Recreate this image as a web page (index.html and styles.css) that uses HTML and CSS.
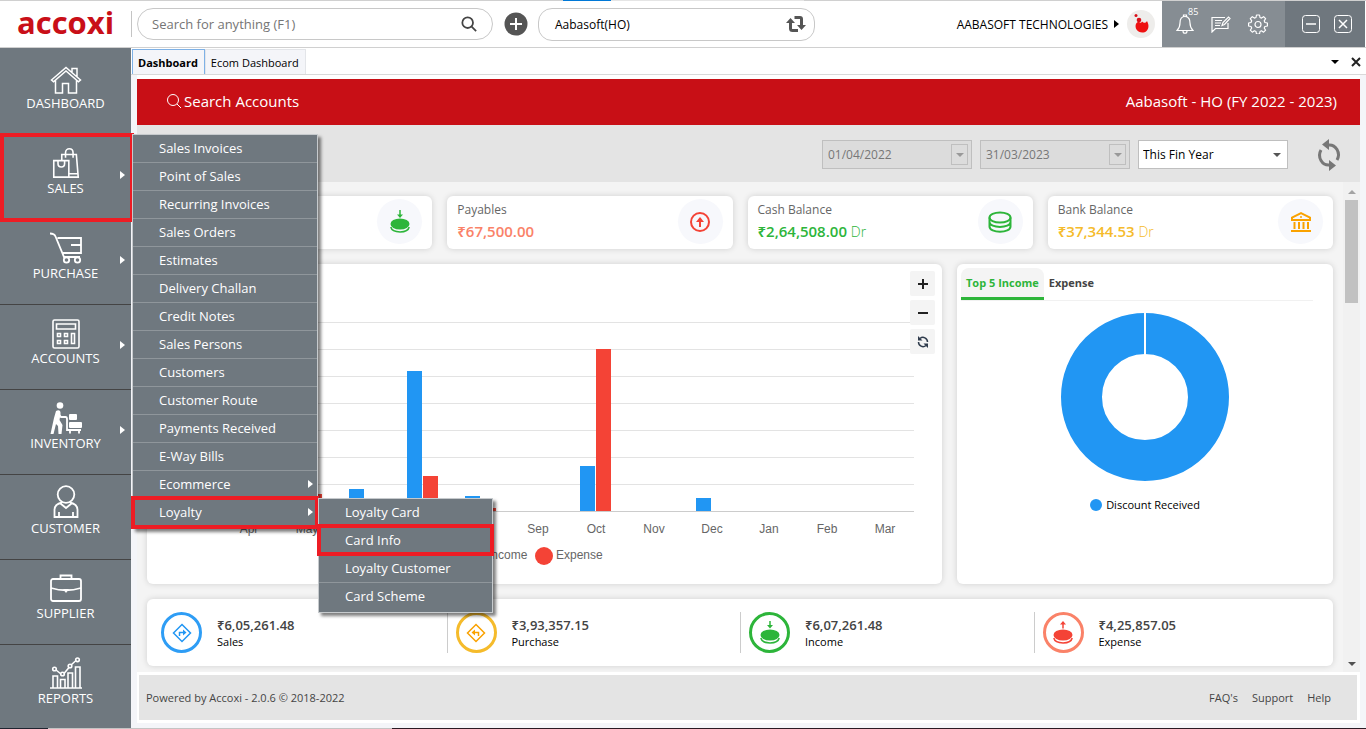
FILE: index.html
```html
<!DOCTYPE html>
<html lang="en">
<head>
    <meta charset="UTF-8">
    <meta name="viewport" content="width=device-width, initial-scale=1.0">
    <title>Accoxi - Dashboard</title>
    <link rel="stylesheet" href="styles.css">
</head>
<body>

    <header class="topbar">
        <a href="#" class="logo">accoxi</a>
        <form class="search" role="search">
            <input type="text" id="search" aria-label="Search" placeholder="Search for anything (F1)">
            <button type="button" aria-label="Search">
                <svg width="16" height="16" viewBox="0 0 18 18" fill="none" stroke="#444" stroke-width="2"><circle cx="7.500" cy="7.500" r="6"/><path d="M12 12l5 5"/></svg>
            </button>
        </form>
        <button type="button" class="add" aria-label="Add new">
            <svg width="24" height="24" viewBox="0 0 24 24"><circle cx="12" cy="12" r="11.500" fill="#555"/><path d="M12 6v12M6 12h12" stroke="#fff" stroke-width="2"/></svg>
        </button>
        <button type="button" class="branch">
            <span>Aabasoft(HO)</span>
            <svg width="20" height="18" viewBox="0 0 20 18" fill="none" stroke="#555" stroke-width="3"><path d="M4.500 6v7.500q0 2 2 2H12M8.500 2.500H14q1.500 0 1.500 1.500v8"/><path d="M0 8l4.500-5L9 8zM11 10l4.500 5L20 10z" fill="#555" stroke="none"/></svg>
        </button>

        <button type="button" class="company">AABASOFT TECHNOLOGIES <i class="caret-right"></i></button>
        <svg class="avatar" width="28" height="28" viewBox="0 0 28 28"><circle cx="14" cy="14" r="14" fill="#eeedeb"/><path d="M15 11.500c2.500 2.500 4 1 5-.5 2.500 4.500 1.500 8-.5 10-2.500 2.500-8 2-10-1.500C7.500 16 9 12 12 11.800c1 1.200 2.500 1.200 3-.3z" fill="#ee1111"/><circle cx="12" cy="10" r="2.300" fill="#d9101a"/><circle cx="9" cy="5.500" r="1.500" fill="#d9101a"/></svg>

        <div class="tools">
            <button type="button" aria-label="Notifications">
                <svg width="18" height="20" viewBox="0 0 18 20" fill="none" stroke="#fff" stroke-width="1.200"><path d="M9 2.500C5 2.500 4 6 4 9c0 4-1.500 6-3 7.500h16C15.500 15 14 13 14 9c0-3-1-6.500-5-6.500zM7.500 2.500V1h3v1.500M7 17c0 3 4 3 4 0"/></svg>
                <span class="badge">85</span>
            </button>
            <button type="button" aria-label="Messages">
                <svg width="20" height="18" viewBox="0 0 20 18" fill="none" stroke="#fff" stroke-width="1.200"><path d="M14 2.500H1V17l3.500-3.500H17V8M4 5.500h7M4 8h6M4 10.500h5M11 10.500l1-3 5.500-5.500 1.500 1.500-5.500 6z"/></svg>
            </button>
            <button type="button" aria-label="Settings">
                <svg width="20" height="20" viewBox="0 0 20 20" fill="none" stroke="#fff" stroke-width="1.200" stroke-linejoin="round"><path d="M8.500 1h3l.5 2.500 1.500.6L15.600 2.700l2 2-1.400 2.100.7 1.700 2.500.5v3l-2.500.5-.7 1.500 1.400 2.200-2 2-2.100-1.400-1.500.7-.5 2.500h-3L8 17.500l-1.600-.7-2.100 1.400-2-2 1.400-2.200-.7-1.500L.6 12V9l2.400-.5.7-1.700-1.400-2.100 2-2 2.100 1.400L8 3.500z"/><circle cx="10" cy="10.500" r="3"/></svg>
            </button>
        </div>
        <div class="window-buttons">
            <button type="button" aria-label="Minimize">
                <svg width="18" height="18" viewBox="0 0 18 18" fill="none" stroke="#fff"><rect x=".5" y=".5" width="17" height="17" rx="3"/><path d="M4 9h10" stroke-width="1.500"/></svg>
            </button>
            <button type="button" aria-label="Close">
                <svg width="18" height="18" viewBox="0 0 18 18" fill="none" stroke="#fff"><rect x=".5" y=".5" width="17" height="17" rx="3"/><path d="M5 5l8 8M13 5l-8 8" stroke-width="1.500"/></svg>
            </button>
        </div>
    </header>

    <div class="layout">
        <nav class="sidebar">
            <ul>
                <li>
                    <a href="#">
                        <svg width="32" height="28" viewBox="0 0 32 28" fill="none" stroke="#fff" stroke-width="1.500"><path d="M1.500 14L16 1.500 30.500 14l-2 1.800L16 5 3.500 15.800zM22 6V2.500h5v8M5.500 14.500V27h7v-9.500h6V27h8V14.500"/></svg>
                        DASHBOARD
                    </a>
                </li>
                <li class="open">
                    <a href="#">
                        <svg width="30" height="32" viewBox="0 0 30 34" fill="none" stroke="#fff" stroke-width="1.700"><path d="M2 14.500h16V32H2zM6.500 14.500v3c0 5 7 5 7 0v-3M10.500 14V8H26l2 24H18M18 28.500h9.500M14.500 11.500V6c0-5.500 8-5.500 8 0v5.500"/></svg>
                        SALES <i class="caret-right"></i>
                    </a>
                    <ul class="menu">
                        <li><a href="#">Sales Invoices</a></li>
                        <li><a href="#">Point of Sales</a></li>
                        <li><a href="#">Recurring Invoices</a></li>
                        <li><a href="#">Sales Orders</a></li>
                        <li><a href="#">Estimates</a></li>
                        <li><a href="#">Delivery Challan</a></li>
                        <li><a href="#">Credit Notes</a></li>
                        <li><a href="#">Sales Persons</a></li>
                        <li><a href="#">Customers</a></li>
                        <li><a href="#">Customer Route</a></li>
                        <li><a href="#">Payments Received</a></li>
                        <li><a href="#">E-Way Bills</a></li>
                        <li><a href="#">Ecommerce <i class="caret-right"></i></a></li>
                        <li class="marked">
                            <a href="#">Loyalty <i class="caret-right"></i></a>
                            <ul class="menu submenu">
                                <li><a href="#">Loyalty Card</a></li>
                                <li class="marked"><a href="#">Card Info</a></li>
                                <li><a href="#">Loyalty Customer</a></li>
                                <li><a href="#">Card Scheme</a></li>
                            </ul>
                        </li>
                    </ul>
                </li>
                <li>
                    <a href="#">
                        <svg width="34" height="32" viewBox="0 0 34 32" fill="none" stroke="#fff" stroke-width="1.800"><path d="M1 1.500c3 0 4.500.5 5.500 3L15 25h16M8.500 6H32v15H14M22 13h10"/><circle cx="17.500" cy="28" r="2.700"/><circle cx="28.500" cy="28" r="2.700"/></svg>
                        PURCHASE <i class="caret-right"></i>
                    </a>
                </li>
                <li>
                    <a href="#">
                        <svg width="28" height="30" viewBox="0 0 28 30" fill="none" stroke="#fff" stroke-width="1.600"><rect x="1" y="1" width="26" height="28" rx="1.500"/><path d="M4.500 5h19v5h-19zM5.500 14.500h3v3h-3zM12.500 14.500h3v3h-3zM5.500 21.500h3v3h-3zM12.500 21.500h3v3h-3zM19.500 14.500h3v10h-3z"/></svg>
                        ACCOUNTS <i class="caret-right"></i>
                    </a>
                </li>
                <li>
                    <a href="#">
                        <svg width="32" height="32" viewBox="0 0 32 32" fill="none" stroke="#fff" stroke-width="1.800"><circle cx="10" cy="3.500" r="3.300" fill="#fff" stroke="none"/><path d="M6 9c3-2 5 0 4.500 3l-1 6 3 5-1 9H8.500l-.5-8-2-2-2.500 10H.5L4 16z" fill="#fff" stroke="none"/><path d="M8 11l3 4h4.500c1 0 1.500 1 1.500 2v11h14"/><rect x="19" y="12" width="8" height="6" rx="1" fill="#fff" stroke="none"/><rect x="19" y="20" width="13" height="6" rx="1" fill="#fff" stroke="none"/><path d="M20 29v2.500M29 29v2.500"/></svg>
                        INVENTORY <i class="caret-right"></i>
                    </a>
                </li>
                <li>
                    <a href="#">
                        <svg width="26" height="34" viewBox="0 0 26 34" fill="none" stroke="#fff" stroke-width="1.800"><circle cx="13" cy="9.500" r="8.300"/><path d="M9 17.500c-5 1-7.500 3-7.500 7.500v7h23v-7c0-4.500-2.500-6.500-7.500-7.500M7.500 18.500L13 23l5.500-4.500M6 32v-5M20 32v-5"/></svg>
                        CUSTOMER
                    </a>
                </li>
                <li>
                    <a href="#">
                        <svg width="32" height="30" viewBox="0 0 32 30" fill="none" stroke="#fff" stroke-width="1.800"><rect x="1" y="5" width="30" height="22" rx="2"/><path d="M10.500 5V1.500h11V5M1 14c10 3 20 3 30 0"/><path d="M13 15h6l-3 4z" fill="#fff" stroke="none"/></svg>
                        SUPPLIER
                    </a>
                </li>
                <li>
                    <a href="#">
                        <svg width="32" height="32" viewBox="0 0 32 32" fill="none" stroke="#fff" stroke-width="1.600"><path d="M0 31h32M3 31V19h4.500v12M10.500 31v-8.500H15V31M18 31V16h4.500v15M25.500 31V10H30v21M6 13l5 4M14 16.500l5-6M21 8l5-4.500"/><circle cx="4.500" cy="12" r="1.800"/><circle cx="12.500" cy="17" r="1.800"/><circle cx="20" cy="9" r="1.800"/><circle cx="27.500" cy="2.800" r="1.800"/></svg>
                        REPORTS
                    </a>
                </li>
            </ul>
        </nav>

        <main>
            <div class="tabs">
                <a href="#" class="tab active">Dashboard</a>
                <a href="#" class="tab">Ecom Dashboard</a>
                <button type="button" class="tabs-list" aria-label="Tab list"><i class="caret-down"></i></button>
                <button type="button" aria-label="Close tab">
                    <svg width="10" height="10" viewBox="0 0 10 10" stroke="#222" stroke-width="2"><path d="M1 1l8 8M9 1L1 9"/></svg>
                </button>
            </div>

            <div class="page">
                <div class="banner">
                    <button type="button">
                        <svg width="16" height="16" viewBox="0 0 16 16" fill="none" stroke="#fff"><circle cx="7" cy="7" r="5.500"/><path d="M11 11l4 4"/></svg>
                        Search Accounts
                    </button>
                    <span>Aabasoft - HO (FY 2022 - 2023)</span>
                </div>

                <div class="filters">
                    <div class="date">
                        <input type="text" id="from" value="01/04/2022" aria-label="From date" disabled>
                        <span class="date-arrow"><i class="caret-down"></i></span>
                    </div>
                    <div class="date">
                        <input type="text" id="to" value="31/03/2023" aria-label="To date" disabled>
                        <span class="date-arrow"><i class="caret-down"></i></span>
                    </div>
                    <div class="period">
                        <select id="period" aria-label="Period">
                            <option>This Fin Year</option>
                        </select>
                        <i class="caret-down"></i>
                    </div>
                    <button type="button" class="reload" aria-label="Reload">
                        <svg width="26" height="32" viewBox="0 0 26 32" fill="none" stroke="#777" stroke-width="3"><path d="M12 6c8-1 13 8 9 15M14 26C6 27 1 18 5 11"/><path d="M13 0v11L6 5.500zM13 21v11l7-5.500z" fill="#777" stroke="none"/></svg>
                    </button>
                </div>

                <div class="scroll-area">
                    <div class="content">
                        <section class="cards">
                            <div class="card">
                                <span class="card-icon"><svg width="20" height="24" viewBox="0 0 20 24"><path d="M10 0v7" stroke="#2db53a" stroke-width="1.500"/><path d="M7 4.500h6L10 8z" fill="#2db53a"/><ellipse cx="10" cy="14" rx="9.500" ry="5.500" fill="#2db53a"/><path d="M.8 17c1.500 6.500 17 6.500 18.400 0" fill="none" stroke="#2db53a" stroke-width="1.500"/></svg></span>
                            </div>
                            <div class="card">
                                <div>
                                    <p>Payables</p>
                                    <strong class="salmon">₹67,500.00</strong>
                                </div>
                                <span class="card-icon"><svg width="22" height="22" viewBox="0 0 22 22" fill="none" stroke="#f44336" stroke-width="2"><circle cx="11" cy="11" r="9"/><path d="M11 16V9"/><path d="M7 11l4-5 4 5z" fill="#f44336" stroke="none"/></svg></span>
                            </div>
                            <div class="card">
                                <div>
                                    <p>Cash Balance</p>
                                    <strong class="green">₹2,64,508.00 <small>Dr</small></strong>
                                </div>
                                <span class="card-icon"><svg width="24" height="22" viewBox="0 0 24 22" fill="none" stroke="#2db53a" stroke-width="2"><ellipse cx="12" cy="6.500" rx="10.500" ry="5"/><path d="M1.500 6.500v9c0 7 21 7 21 0v-9M1.500 11c0 6.500 21 6.500 21 0"/></svg></span>
                            </div>
                            <div class="card">
                                <div>
                                    <p>Bank Balance</p>
                                    <strong class="yellow">₹37,344.53 <small>Dr</small></strong>
                                </div>
                                <span class="card-icon"><svg width="22" height="22" viewBox="0 0 22 22" fill="none" stroke="#faa200" stroke-width="2"><path d="M1 20h20M2 9V6.500L11 2l9 4.500V9zM4.500 11v7M9 11v7M13.500 11v7M18 11v7"/><circle cx="11" cy="6" r="1" fill="#faa200" stroke="none"/></svg></span>
                            </div>
                        </section>

                        <section class="charts">
                            <div class="panel">
                                <svg class="bar-chart" viewBox="0 0 795 320">
                                    <path class="grid" d="M72 58.500h695M72 85.500h695M72 112.500h695M72 139.500h695M72 166.500h695M72 193.500h695M72 220.500h695"/>
                                    <g fill="#2196f3">
                                        <rect x="202" y="225" width="15" height="22"/>
                                        <rect x="260" y="107" width="15" height="140"/>
                                        <rect x="318" y="232" width="15" height="15"/>
                                        <rect x="433" y="202" width="15" height="45"/>
                                        <rect x="549" y="234" width="15" height="13"/>
                                    </g>
                                    <g fill="#f44336">
                                        <rect x="160" y="230" width="15" height="17"/>
                                        <rect x="276" y="212" width="15" height="35"/>
                                        <rect x="334" y="244" width="15" height="3"/>
                                        <rect x="449" y="85" width="15" height="162"/>
                                    </g>
                                    <path class="axis" d="M72 247.500h695"/>
                                    <g class="months">
                                        <text x="102" y="269">Apr</text>
                                        <text x="160" y="269">May</text>
                                        <text x="391" y="269">Sep</text>
                                        <text x="449" y="269">Oct</text>
                                        <text x="507" y="269">Nov</text>
                                        <text x="565" y="269">Dec</text>
                                        <text x="622" y="269">Jan</text>
                                        <text x="680" y="269">Feb</text>
                                        <text x="738" y="269">Mar</text>
                                    </g>
                                    <g class="legend">
                                        <circle cx="328" cy="292" r="9" fill="#2196f3"/>
                                        <text x="341" y="295">Income</text>
                                        <circle cx="397" cy="292" r="9" fill="#f44336"/>
                                        <text x="409" y="295">Expense</text>
                                    </g>
                                </svg>
                                <div class="zoom">
                                    <button type="button" aria-label="Zoom in"><svg width="10" height="10" viewBox="0 0 10 10" stroke="#222" stroke-width="2"><path d="M0 5h10M5 0v10"/></svg></button>
                                    <button type="button" aria-label="Zoom out"><svg width="10" height="10" viewBox="0 0 10 10" stroke="#222" stroke-width="2"><path d="M0 5h10"/></svg></button>
                                    <button type="button" aria-label="Reset zoom"><svg width="12" height="12" viewBox="0 0 12 12" fill="none" stroke="#2f3b4c" stroke-width="1.500"><path d="M3 2.500c3-2.500 7.500-.5 7.500 3.500M9 9.500C6 12 1.500 10 1.500 6"/><path d="M1 0v4.500h4.500zM11 12V7.500H6.500z" fill="#2f3b4c" stroke="none"/></svg></button>
                                </div>
                            </div>

                            <div class="panel top5">
                                <div class="top5-tabs">
                                    <a href="#" class="active">Top 5 Income</a>
                                    <a href="#">Expense</a>
                                </div>
                                <svg class="donut" width="168" height="168" viewBox="0 0 168 168"><circle cx="84" cy="84" r="63.500" fill="none" stroke="#2196f3" stroke-width="41"/><path d="M84 0v42" stroke="#fff" stroke-width="2"/></svg>
                                <p class="donut-legend">Discount Received</p>
                            </div>
                        </section>

                        <section class="totals">
                            <div class="total">
                                <span class="ring blue"><svg width="20" height="20" viewBox="0 0 20 20" fill="none" stroke="#2196f3" stroke-width="1.500"><path d="M10 1.500l8.500 8.500-8.500 8.500L1.500 10zM7.500 13V9.500H12"/><path d="M11 6.500l3.500 3-3.500 3z" fill="#2196f3" stroke="none"/></svg></span>
                                <div><strong>₹6,05,261.48</strong><p>Sales</p></div>
                            </div>
                            <div class="total">
                                <span class="ring amber"><svg width="20" height="20" viewBox="0 0 20 20" fill="none" stroke="#faa200" stroke-width="1.500"><path d="M10 1.500l8.500 8.500-8.500 8.500L1.500 10zM12.500 13V9.500H8"/><path d="M9 6.500l-3.500 3 3.500 3z" fill="#faa200" stroke="none"/></svg></span>
                                <div><strong>₹3,93,357.15</strong><p>Purchase</p></div>
                            </div>
                            <div class="total">
                                <span class="ring lime"><svg width="20" height="24" viewBox="0 0 20 24"><path d="M10 0v6" stroke="#2db53a" stroke-width="1.500"/><path d="M7 4h6l-3 3.500z" fill="#2db53a"/><ellipse cx="10" cy="14" rx="9.500" ry="5.500" fill="#2db53a"/><path d="M.8 17c1.500 6.500 17 6.500 18.400 0" fill="none" stroke="#2db53a" stroke-width="1.500"/></svg></span>
                                <div><strong>₹6,07,261.48</strong><p>Income</p></div>
                            </div>
                            <div class="total">
                                <span class="ring coral"><svg width="20" height="24" viewBox="0 0 20 24"><path d="M10 2v5.500" stroke="#f44336" stroke-width="1.500"/><path d="M7 3.500h6L10 0z" fill="#f44336"/><ellipse cx="10" cy="14" rx="9.500" ry="5.500" fill="#f44336"/><path d="M.8 17c1.500 6.500 17 6.500 18.400 0" fill="none" stroke="#f44336" stroke-width="1.500"/></svg></span>
                                <div><strong>₹4,25,857.05</strong><p>Expense</p></div>
                            </div>
                        </section>
                    </div>
                    <div class="scrollbar">
                        <i class="caret-up"></i>
                        <div class="thumb"></div>
                        <i class="caret-down"></i>
                    </div>
                </div>

                <footer>
                    <span>Powered by Accoxi - 2.0.6 © 2018-2022</span>
                    <a href="#">FAQ's</a>
                    <a href="#">Support</a>
                    <a href="#">Help</a>
                </footer>
            </div>
        </main>
    </div>

</body>
</html>
```

FILE: styles.css
```css
* {
    box-sizing: border-box;
}

body {
    font-family: 'Open Sans', 'Noto Sans', sans-serif;
    font-size: 12px;
    margin: 0;
    min-height: 100vh;
    display: flex;
    flex-direction: column;
    background-color: #f4f5f9;
    color: #000;
}

/* edge of the window */
body::after {
    content: '';
    height: 1px;
    background: linear-gradient(to right, #1f2430 48px, #c4c4c4 48px, #c4c4c4 392px, #2a1a24 392px);
}

button, input, select {
    font: inherit;
    color: inherit;
}

button {
    padding: 0;
    border: none;
    background: none;
    cursor: pointer;
    display: flex;
    align-items: center;
    justify-content: center;
}

a {
    color: inherit;
    text-decoration: none;
}

ul {
    list-style: none;
    margin: 0;
    padding: 0;
}

p {
    margin: 0;
}

svg {
    flex-shrink: 0;
}

/* small triangles */
.caret-right {
    border: 4px solid transparent;
    border-left: 5px solid currentColor;
    border-right: 0;
}

.caret-down {
    border: 4px solid transparent;
    border-top: 4px solid currentColor;
    border-bottom: 0;
}

.caret-up {
    border: 4px solid transparent;
    border-bottom: 4px solid currentColor;
    border-top: 0;
}

/* top bar */
.topbar {
    height: 48px;
    padding: 1px 1px 0 0;
    display: flex;
    align-items: center;
    background: linear-gradient(to right, #d0d0d0 563px, #0078d7 563px, #0078d7 611px, #e5e5e5 611px, #e5e5e5 804px, #d0d0d0 804px) top / 100% 1px no-repeat #fff;
    border-bottom: 1px solid #d0d0d0;
}

.logo {
    width: 132px;
    height: 26px;
    padding-left: 17px;
    border-right: 1px solid #c4c4c4;
    color: #c90f18;
    font-size: 31px;
    font-weight: 700;
    line-height: 22px;
}

.search {
    width: 356px;
    height: 32px;
    margin-left: 5px;
    padding: 0 15px 0 14px;
    display: flex;
    align-items: center;
    border: 1px solid #c8c8c8;
    border-radius: 16px;
}

.search input {
    flex: 1;
    padding: 0;
    border: none;
    outline: none;
    font-size: 13px;
}

.search input::placeholder {
    color: #757575;
}

.add {
    margin: 0 10px 0 11px;
}

.branch {
    width: 277px;
    height: 33px;
    padding: 0 8px 0 16px;
    justify-content: space-between;
    border: 1px solid #c8c8c8;
    border-radius: 14px;
}

.company {
    margin-left: auto;
    gap: 6px;
    white-space: nowrap;
}

.avatar {
    margin: 0 7px 0 8px;
}

.tools,
.window-buttons {
    align-self: stretch;
    display: flex;
    align-items: center;
    justify-content: center;
    color: #fff;
}

.tools {
    width: 123px;
    padding-right: 3px;
    gap: 17px;
    background: #868d93;
}

.tools button {
    position: relative;
}

.badge {
    position: absolute;
    top: -8px;
    left: 12px;
    font-size: 9px;
    line-height: 12px;
}

.window-buttons {
    width: 80px;
    padding-left: 4px;
    gap: 14px;
    background: #6f777e;
}

/* sidebar */
.layout {
    flex: 1;
    display: flex;
}

.sidebar {
    width: 131px;
    flex-shrink: 0;
    padding-top: 2px;
    background: #6f787f;
    color: #fff;
}

.sidebar > ul > li {
    position: relative;
    height: 85px;
    border-bottom: 1px solid #444;
}

.sidebar > ul > li:last-child {
    height: 83px;
    border-bottom: none;
}

.sidebar > ul > li > a {
    height: 62px;
    display: flex;
    flex-direction: column;
    align-items: center;
    justify-content: flex-end;
    font-size: 13px;
    line-height: 18px;
}

.sidebar > ul > li > a .caret-right {
    position: absolute;
    right: 6px;
    top: 36px;
}

.open::after,
.marked::after {
    content: '';
    position: absolute;
    border: 4px solid #ed1c24;
    pointer-events: none;
}

.open::after {
    inset: -2px -3px -3px 0;
}

.marked::after {
    inset: -3px -2px -2px;
    z-index: 1;
}

.menu {
    position: absolute;
    z-index: 10;
    top: -1px;
    left: 132px;
    width: 186px;
    padding-bottom: 1px;
    border: 1px solid #c6cacd;
    background: #6f787f;
    box-shadow: 3px 3px 3px rgba(0, 0, 0, 0.5);
}

.menu > li {
    position: relative;
    height: 28px;
    border-bottom: 1px solid #8f969b;
}

.menu > li:last-child {
    border-bottom: none;
}

.menu > li > a {
    height: 26px;
    padding: 0 4px 0 26px;
    display: flex;
    align-items: center;
    justify-content: space-between;
    font-size: 13px;
}

.submenu {
    left: 185px;
    width: 175px;
}

/* document tabs */
main {
    flex: 1;
    min-width: 0;
    display: flex;
    flex-direction: column;
}

.tabs {
    height: 27px;
    padding: 1px 5px 0 1px;
    display: flex;
    background: #fff;
    border-bottom: 1px solid #d9d9d9;
}

.tab {
    padding: 0 6px 0 5px;
    display: flex;
    align-items: center;
    background: #f4f5f9;
    border: 1px solid #e3e5e9;
    border-bottom: none;
    font-size: 11px;
}

.tab.active {
    border-color: #7eb1e6;
    font-weight: 700;
}

.tabs-list {
    margin: 0 12px 0 auto;
}

.page {
    flex: 1;
    margin: 0 6px 5px;
    padding-top: 4px;
    background: #fff;
    display: flex;
    flex-direction: column;
}

.banner {
    height: 46px;
    padding: 0 23px 2px 29px;
    display: flex;
    align-items: center;
    justify-content: space-between;
    background: #c80f16;
    color: #fff;
    font-size: 15px;
}

.banner button {
    gap: 2px;
}

.filters {
    height: 57px;
    padding: 2px 18px 0;
    display: flex;
    align-items: center;
    justify-content: flex-end;
    gap: 8px;
    background: #e4e4e4;
}

.date,
.period {
    width: 150px;
    height: 29px;
    display: flex;
    align-items: center;
    border: 1px solid #bfbfbf;
}

.date {
    padding: 0 3px 0 5px;
    background: #dcdcdc;
    color: #777;
}

.date input {
    flex: 1;
    min-width: 0;
    padding: 0;
    border: none;
    background: none;
}

.date-arrow {
    width: 17px;
    height: 21px;
    display: flex;
    align-items: center;
    justify-content: center;
    border: 1px solid #bfbfbf;
    color: #999;
}

.period {
    position: relative;
    background: #fff;
}

.period select {
    width: 100%;
    height: 100%;
    padding: 0 4px;
    border: none;
    background: none;
    appearance: none;
}

.period .caret-down {
    position: absolute;
    right: 6px;
    color: #555;
}

.reload {
    margin-left: 20px;
}

/* dashboard */
.scroll-area {
    flex: 1;
    display: flex;
    background: #f4f4f4;
}

.content {
    flex: 1;
    min-width: 0;
    padding: 14px 10px 6px;
    display: flex;
    flex-direction: column;
    gap: 15px;
}

.cards {
    display: grid;
    grid-template-columns: repeat(4, 1fr);
    gap: 15px;
}

.card,
.panel,
.totals {
    background: #fff;
    border-radius: 6px;
    box-shadow: 0 0 6px rgba(0, 0, 0, 0.15);
}

.card {
    height: 53px;
    padding: 0 10px 2px;
    display: flex;
    align-items: center;
    justify-content: space-between;
}

.card p {
    color: #666;
    line-height: 18px;
}

.card strong {
    display: block;
    font-size: 15px;
    font-weight: 600;
    line-height: 24px;
}

.card small {
    font-size: 14px;
    font-weight: 300;
    line-height: 14px;
}

.card-icon {
    width: 45px;
    height: 45px;
    margin-left: auto;
    display: flex;
    align-items: center;
    justify-content: center;
    border-radius: 50%;
    background: #f7f8fc;
}

.green {
    color: #2db53a;
}

.salmon {
    color: #fa8268;
}

.yellow {
    color: #f5bb2b;
}

.charts {
    display: grid;
    grid-template-columns: 795fr 376fr;
    gap: 15px;
}

.panel {
    position: relative;
}

.bar-chart {
    display: block;
    width: 100%;
    font-family: 'Liberation Sans', Arial, sans-serif;
    font-size: 12px;
}

.bar-chart text {
    fill: #666;
}

.grid {
    stroke: #e3e3e3;
}

.axis {
    stroke: #ccc;
}

.months {
    text-anchor: middle;
}

.zoom {
    position: absolute;
    top: 7px;
    right: 7px;
    display: flex;
    flex-direction: column;
    gap: 4px;
}

.zoom button {
    width: 25px;
    height: 25px;
    border-radius: 2px;
    background: #f4f4f4;
}

.top5 {
    padding: 4px;
    display: flex;
    flex-direction: column;
    align-items: center;
}

.top5-tabs {
    align-self: stretch;
    margin-right: 16px;
    display: flex;
    border-bottom: 1px solid #f1f1f1;
    font-size: 11px;
    font-weight: 700;
}

.top5-tabs a {
    height: 32px;
    padding: 0 5px;
    line-height: 30px;
    color: #444;
}

.top5-tabs .active {
    border-bottom: 3px solid #2db53a;
    border-radius: 8px 8px 0 0;
    background: #f4f4f4;
    color: #2db53a;
}

.donut {
    margin: 12px 0 15px;
}

.donut-legend {
    display: flex;
    align-items: center;
    gap: 4px;
    font-size: 11px;
    line-height: 18px;
}

.donut-legend::before {
    content: '';
    width: 12px;
    height: 12px;
    border-radius: 50%;
    background: #2196f3;
}

.totals {
    height: 67px;
    padding: 13px 6px;
    display: grid;
    grid-template-columns: repeat(4, 1fr);
}

.total {
    padding-left: 8px;
    display: flex;
    align-items: center;
    gap: 15px;
}

.total + .total {
    border-left: 1px solid #ccc;
}

.total strong {
    color: #444;
    font-size: 13px;
    font-weight: 600;
    line-height: 18px;
}

.total p {
    font-size: 11px;
    line-height: 16px;
}

.ring {
    width: 41px;
    height: 41px;
    display: flex;
    align-items: center;
    justify-content: center;
    border: 3px solid;
    border-radius: 50%;
}

.blue {
    border-color: #2e9df5;
}

.amber {
    border-color: #f5bb2b;
}

.lime {
    border-color: #2db53a;
}

.coral {
    border-color: #fa8268;
}

.scrollbar {
    width: 17px;
    padding: 8px 2px 6px;
    display: flex;
    flex-direction: column;
    align-items: center;
    gap: 6px;
    background: #f1f1f1;
    color: #505050;
}

.scrollbar .caret-up {
    color: #a3a3a3;
}

.scrollbar .caret-down {
    margin-top: auto;
}

.thumb {
    width: 13px;
    height: 103px;
    background: #c1c1c1;
}

footer {
    height: 45px;
    margin: 3px 3px 3px 2px;
    padding: 0 26px 0 7px;
    display: flex;
    align-items: center;
    gap: 14px;
    background: #e4e4e4;
    color: #444;
    font-size: 11px;
}

footer span {
    margin-right: auto;
}
```
